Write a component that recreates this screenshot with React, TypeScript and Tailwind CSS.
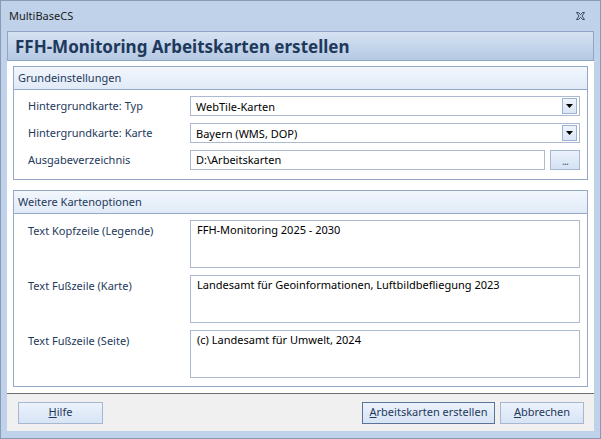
import React from "react";

const font = { fontFamily: '"Noto Sans", "Open Sans", sans-serif' };

function Combo({ value }: { value: string }) {
  return (
    <div className="flex-1 h-[20px] flex items-center border border-[#abbad1] bg-white pl-[5px] pr-[2px]">
      <span className="flex-1 text-[11px] text-black leading-none">{value}</span>
      <div className="w-[15px] h-[16px] border border-[#9fb1cb] bg-gradient-to-b from-[#eef4fc] to-[#dbe6f5] flex items-center justify-center">
        <svg width="7" height="4" viewBox="0 0 7 4">
          <path d="M0 0h7L3.5 4z" fill="#000" />
        </svg>
      </div>
    </div>
  );
}

function Row({ label, children }: { label: string; children: React.ReactNode }) {
  return (
    <div className="flex items-center">
      <div className="w-[176px] pl-[14px] text-[11px] text-[#1e395b]">{label}</div>
      <div className="flex-1 flex gap-[5px] pr-[7px]">{children}</div>
    </div>
  );
}

function TextRow({ label, value }: { label: string; value: string }) {
  return (
    <div className="flex">
      <div className="w-[176px] pl-[14px] pt-[3px] text-[11px] text-[#1e395b]">{label}</div>
      <div className="flex-1 pr-[7px]">
        <div className="h-[48px] border border-[#abbad1] bg-white px-[6px] pt-[1px] text-[11px] text-black">
          {value}
        </div>
      </div>
    </div>
  );
}

function Group({ title, children, className }: { title: string; children: React.ReactNode; className: string }) {
  return (
    <div className={"border border-[#94a9c7] bg-white flex flex-col " + className}>
      <div className="h-[23px] border-b border-[#94a9c7] bg-gradient-to-b from-[#f3f7fd] to-[#e0eaf7] pl-[4px] flex items-center text-[11px] text-[#1e395b]">
        {title}
      </div>
      {children}
    </div>
  );
}

function Btn({ children, width, strong }: { children: React.ReactNode; width: string; strong?: boolean }) {
  return (
    <div
      className={
        "h-[22px] flex items-center justify-center text-[11px] text-[#1e395b] bg-gradient-to-b from-[#ebf2fc] to-[#d7e4f5] border " +
        (strong ? "border-[#5a7499] " : "border-[#a6b8d1] ") +
        width
      }
    >
      {children}
    </div>
  );
}

export default function App() {
  return (
    <div className="w-[601px] h-[439px] border border-[#8a9ab2] bg-[#bfd2ea] flex flex-col px-[6px]" style={font}>
      <div className="h-[30px] flex items-center justify-between pl-[2px] pr-[9px]">
        <span className="text-[11px] text-[#1b1b1b]">MultiBaseCS</span>
        <svg width="9" height="8" viewBox="0 0 9 8">
          <path
            d="M0.5 0.5h2l2 2.2 2-2.2h2L6 4l2.5 3.5h-2l-2-2.2-2 2.2h-2L3 4z"
            fill="none"
            stroke="#3b4a5e"
            strokeWidth="1"
          />
        </svg>
      </div>
      <div className="h-[30px] border border-[#8ea5c5] bg-gradient-to-b from-[#d6e2f2] to-[#b5c9e3] flex items-center pl-[7px]">
        <span className="text-[17px] font-bold text-[#1e395b] leading-none">FFH-Monitoring Arbeitskarten erstellen</span>
      </div>
      <div className="flex-1 bg-white flex flex-col px-[6px] pt-[5px] gap-[10px]">
        <Group title="Grundeinstellungen" className="h-[114px]">
          <div className="flex flex-col gap-[7px] pt-[6px]">
            <Row label="Hintergrundkarte: Typ">
              <Combo value="WebTile-Karten" />
            </Row>
            <Row label="Hintergrundkarte: Karte">
              <Combo value="Bayern (WMS, DOP)" />
            </Row>
            <Row label="Ausgabeverzeichnis">
              <div className="flex-1 h-[20px] border border-[#abbad1] bg-white pl-[5px] flex items-center text-[11px] text-black">
                D:\Arbeitskarten
              </div>
              <div className="w-[30px] h-[20px] border border-[#a6b8d1] bg-gradient-to-b from-[#ebf2fc] to-[#d4e2f4] flex items-end justify-center pb-[3px]">
                <span className="text-[11px] leading-none text-[#4a5f80] tracking-[-1px]">...</span>
              </div>
            </Row>
          </div>
        </Group>
        <Group title="Weitere Kartenoptionen" className="h-[197px]">
          <div className="flex flex-col gap-[7px] pt-[6px]">
            <TextRow label="Text Kopfzeile (Legende)" value="FFH-Monitoring 2025 - 2030" />
            <TextRow label="Text Fußzeile (Karte)" value="Landesamt für Geoinformationen, Luftbildbefliegung 2023" />
            <TextRow label="Text Fußzeile (Seite)" value="(c) Landesamt für Umwelt, 2024" />
          </div>
        </Group>
      </div>
      <div className="h-[38px] border-t border-[#6d6d6d] bg-[#f0f0f0] flex items-center pl-[11px] pr-[10px]">
        <Btn width="w-[85px]">
          <span><u>H</u>ilfe</span>
        </Btn>
        <div className="flex-1" />
        <Btn width="w-[133px]" strong>
          <span><u>A</u>rbeitskarten erstellen</span>
        </Btn>
        <div className="w-[5px]" />
        <Btn width="w-[84px]">
          <span><u>A</u>bbrechen</span>
        </Btn>
      </div>
      <div className="h-[7px]" />
    </div>
  );
}
